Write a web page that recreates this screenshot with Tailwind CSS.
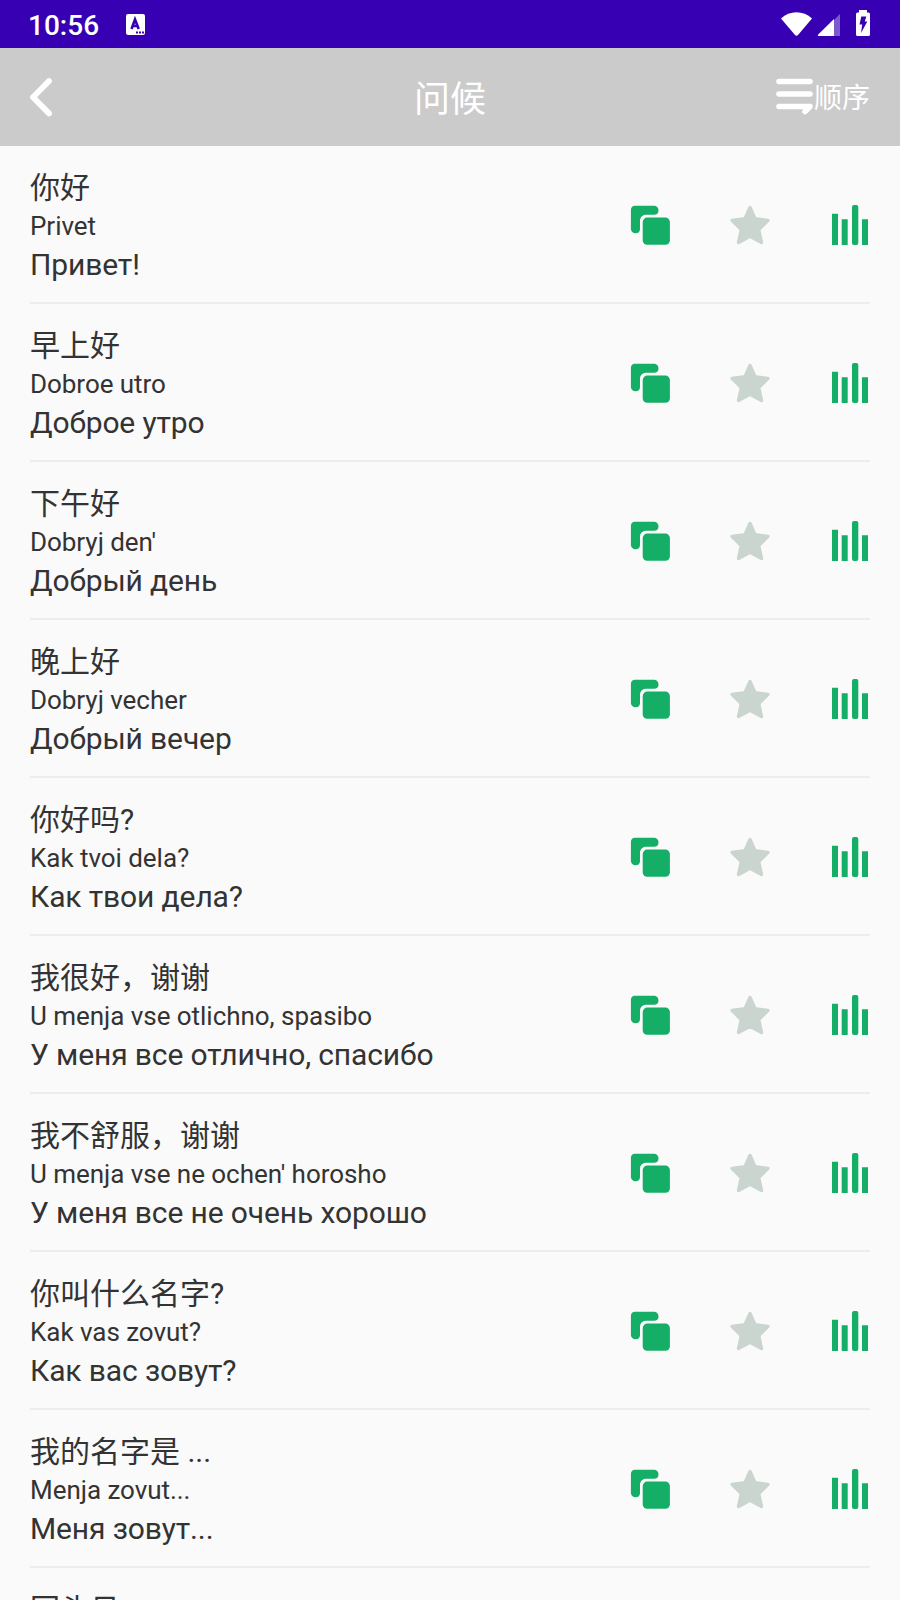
<!DOCTYPE html>
<html lang="zh-CN">
<head>
    <meta charset="UTF-8">
    <meta name="viewport" content="width=device-width, initial-scale=1.0">
    <title>问候</title>
    <script src="https://cdn.jsdelivr.net/npm/@tailwindcss/browser@4"></script>
</head>
<body class="h-[1600px] overflow-hidden bg-[#fafafa] font-[Roboto,'Noto_Sans_CJK_SC',sans-serif] text-[#333333]">
    <!-- Icons -->
    <svg class="hidden">
        <symbol id="icon-copy" viewBox="0 0 40 40">
            <path d="M5 .7h19a4.5 4.5 0 0 1 4.5 4.5v.3a4.5 4.5 0 0 1-4.5 4.3h-8.5a5.5 5.5 0 0 0-5.5 5.5V24a4.5 4.5 0 0 1-4.5 4.3A4.5 4.5 0 0 1 .9 24V5A4.3 4.3 0 0 1 5 .7z" fill="#14ae66"/>
            <rect x="12.7" y="12.6" width="27.2" height="27.2" rx="4.5" fill="#14ae66"/>
        </symbol>
        <symbol id="icon-star" viewBox="0 0 40 40">
            <path d="M20 2.5l5 11.2 13 1.7-9.3 9.2 2.8 12.9L20 31.2 8.5 37.5l2.8-12.9L2 15.4l13-1.7z" fill="#cad5cf" stroke="#cad5cf" stroke-width="3.4" stroke-linejoin="round"/>
        </symbol>
        <symbol id="icon-bars" viewBox="0 0 40 40">
            <path d="M2 8.7h6V40H2zM11.7 14.3h6V40h-6zM32 14.3h6V40h-6z" fill="#14ae66"/>
            <rect x="22" y="0" width="6.3" height="40" rx="2" fill="#14ae66"/>
        </symbol>
    </svg>

    <!-- Status bar -->
    <div class="flex h-12 items-center bg-[#3700b3] text-white">
        <span class="ml-7 w-[98px] pt-1 text-[28px] leading-none font-medium">10:56</span>
        <svg class="h-[21px] w-[19px]" viewBox="0 0 19 21">
            <rect width="19" height="21" rx="2" fill="#fff"/>
            <path d="M5.500 15 9 5.500 12.700 15M7 12h4.500" fill="none" stroke="#3700b3" stroke-width="2.6"/>
            <path d="M10 17.500h2v2h-2zM13 17.500h2v2h-2zM16 17.500h2v2h-2z" fill="#3700b3"/>
        </svg>
        <svg class="ml-auto mr-[30px] h-12 w-[90px]" viewBox="780 0 90 48">
            <path d="M781 18.500c8.500-8.500 22.500-8.500 31 0L798 35q-1.500 1.500-3 0z" fill="#fff"/>
            <path d="M840 14v22h-22z" fill="#fff" fill-opacity=".35"/>
            <path d="M834 19v17h-15q-2 0-.8-1.400z" fill="#fff"/>
            <path d="M857.500 12.500H859V10h8v2.500h1.500q1.500 0 1.500 1.500v20.500q0 1.500-1.500 1.500h-11q-1.500 0-1.500-1.500V14q0-1.500 1.500-1.500z" fill="#fff"/>
            <path d="M861.300 16.500h5l-1.500 5h2.500l-6.300 11.500 1.200-8.500h-2.700z" fill="#3700b3"/>
        </svg>
    </div>

    <!-- Title bar -->
    <header class="grid h-[98px] grid-cols-3 items-center bg-[#cbcbcb] px-[30px] text-white">
        <svg class="h-10 w-6" viewBox="0 0 24 40" fill="none" stroke="#fff" stroke-width="5.8" stroke-linecap="round" stroke-linejoin="round">
            <path d="M19 4 3 20.200 19 36.400"/>
        </svg>
        <h1 class="pt-1.5 text-center text-[36px] leading-none">问候</h1>
        <div class="flex items-center justify-end">
            <svg class="h-[38px] w-[38px]" viewBox="0 0 38 38" fill="none" stroke="#fff" stroke-width="5.6" stroke-linecap="round" stroke-linejoin="round">
                <path d="M3 3.500h31M3 16h31M3 28.500h31l-5 5"/>
            </svg>
            <span class="pt-1 text-[28px] leading-none">顺序</span>
        </div>
    </header>

    <ul id="phraseList" class="px-[30px]"></ul>

    <script>
        const phrases = [
            ['你好', 'Privet', 'Привет!'],
            ['早上好', 'Dobroe utro', 'Доброе утро'],
            ['下午好', "Dobryj den'", 'Добрый день'],
            ['晚上好', 'Dobryj vecher', 'Добрый вечер'],
            ['你好吗?', 'Kak tvoi dela?', 'Как твои дела?'],
            ['我很好，谢谢', 'U menja vse otlichno, spasibo', 'У меня все отлично, спасибо'],
            ['我不舒服，谢谢', "U menja vse ne ochen' horosho", 'У меня все не очень хорошо'],
            ['你叫什么名字?', 'Kak vas zovut?', 'Как вас зовут?'],
            ['我的名字是 ...', 'Menja zovut...', 'Меня зовут...'],
            ['回头见', 'Uvidimsja', 'Увидимся'],
        ];

        document.getElementById('phraseList').innerHTML = phrases.map(([chinese, latin, russian]) => `
            <li class="flex h-[158px] items-center border-b-2 border-[#ededed] pt-0.5">
                <div class="flex-1 pt-[3px]">
                    <p class="h-[39px] text-[30px] leading-[38px]">${chinese}</p>
                    <p class="h-[38px] text-[26px] leading-[37px] tracking-[-0.04px]">${latin}</p>
                    <p class="h-[39px] text-[30px] leading-[38px] tracking-[-0.12px]">${russian}</p>
                </div>
                <div class="flex gap-[60px]">
                    <svg class="size-10"><use href="#icon-copy"/></svg>
                    <svg class="size-10"><use href="#icon-star"/></svg>
                    <svg class="size-10"><use href="#icon-bars"/></svg>
                </div>
            </li>
        `).join('');
    </script>
</body>
</html>
